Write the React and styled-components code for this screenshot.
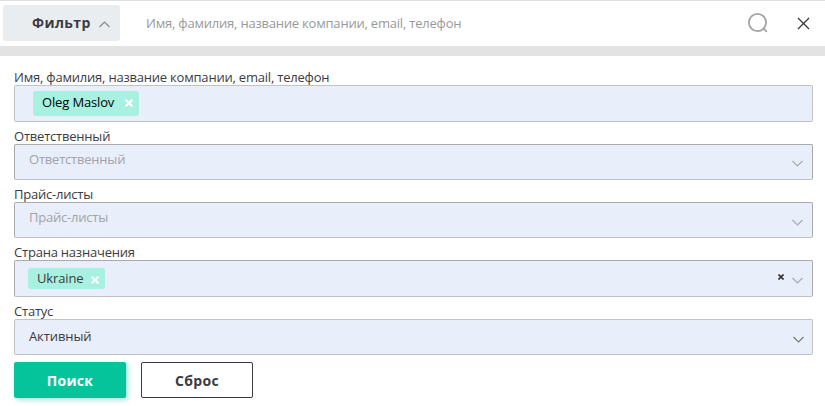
import { useState } from "react";
import styled, { createGlobalStyle } from "styled-components";

const GlobalStyle = createGlobalStyle`
  * {
    box-sizing: border-box;
  }

  body {
    margin: 0;
    background-color: #fff;
    color: #3b3b3f;
    font-family: "Open Sans", "Noto Sans", sans-serif;
    font-size: 13px;
    letter-spacing: -0.21px;
  }

  button,
  input {
    font-family: inherit;
  }
`;

const Container = styled.div`
  width: 100%;
  height: 406px;
  overflow: hidden;
`;

const Header = styled.div`
  display: flex;
  align-items: center;
  height: 56px;
  padding: 0 15px 0 3px;
  border-top: 1px solid #dcdfe3;
  border-bottom: 10px solid #e3e3e3;
`;

const FilterButton = styled.button`
  display: flex;
  align-items: center;
  width: 117px;
  height: 36px;
  margin-top: -1px;
  padding: 0 10px 1px 29px;
  border: none;
  border-radius: 3px;
  background-color: #e9edf0;
  color: #3b3b3f;
  font-size: 14px;
  font-weight: 700;
  letter-spacing: 0.4px;
  cursor: pointer;

  svg {
    margin: 4px 0 0 8px;
  }
`;

const SearchInput = styled.input`
  flex: 1;
  height: 36px;
  margin-left: 26px;
  padding: 0 0 2px;
  border: none;
  outline: none;
  background: transparent;
  font-size: 13px;
  letter-spacing: -0.21px;

  &::placeholder {
    color: #999;
    opacity: 1;
  }
`;

const IconButton = styled.button`
  display: flex;
  padding: 0;
  margin: -1px 0 0 ${(props) => props.$gap || 0}px;
  border: none;
  background: none;
  cursor: pointer;
`;

const Form = styled.form`
  padding: 7px 12px 0 14px;
`;

const Label = styled.label`
  display: block;
  height: 22px;
  padding-top: 5px;
  line-height: 18px;
`;

const Field = styled.div`
  display: flex;
  align-items: center;
  height: ${(props) => props.$height || 36}px;
  padding: 0 8px 0 ${(props) => props.$indent || 14}px;
  border: 1px solid ${(props) => (props.$soft ? "#c3c3c5" : "#aaa")};
  border-bottom-color: #c0c0c2;
  border-radius: 2px;
  background-color: #e8eefa;
`;

const Placeholder = styled.span`
  flex: 1;
  margin-top: -7px;
  color: #a3a3a5;
`;

const Value = styled.span`
  flex: 1;
  margin-top: -2px;
  letter-spacing: -0.1px;
`;

const Tag = styled.span`
  display: flex;
  align-items: center;
  height: ${(props) => props.$height}px;
  padding: 0 6px ${(props) => props.$lift}px 9px;
  border-radius: 3px;
  background-color: #a8f0df;
  color: ${(props) => props.$color || "inherit"};
  letter-spacing: -0.15px;

  svg {
    margin: 3px 0 0 ${(props) => props.$gap}px;
  }
`;

const Clear = styled.span`
  display: flex;
  margin: -4px 8px 0 auto;
`;

const Arrow = styled.span`
  display: flex;
  margin: ${(props) => props.$top || 0}px ${(props) => props.$right || 0}px 0 0;
`;

const Buttons = styled.div`
  display: flex;
  gap: 15px;
  margin-top: 7px;
`;

const Button = styled.button`
  width: 112px;
  height: 36px;
  padding: 1px 0 0;
  border: ${(props) => (props.$primary ? "none" : "1px solid #3b3b3f")};
  border-radius: 2px;
  background-color: ${(props) => (props.$primary ? "#05c49b" : "#fff")};
  box-shadow: ${(props) =>
    props.$primary ? "2px 2px 5px rgba(5, 196, 155, 0.4)" : "none"};
  color: ${(props) => (props.$primary ? "#fff" : "#3b3b3f")};
  font-size: 14px;
  font-weight: 700;
  letter-spacing: 0.3px;
  cursor: pointer;
`;

const Chevron = ({ color = "#aaa", up }) => (
  <svg width="11" height="7" viewBox="0 0 11 7" fill="none">
    <path
      d={up ? "M.5 6 5.5 1l5 5" : "M.5 1l5 5 5-5"}
      stroke={color}
      strokeWidth="1.1"
    />
  </svg>
);

const Cross = ({ size = 8, color = "#fff", width = 2 }) => (
  <svg width={size} height={size} viewBox="0 0 8 8" fill="none">
    <path d="M.6.6l6.8 6.8M7.4.6.6 7.4" stroke={color} strokeWidth={width} />
  </svg>
);

const App = () => {
  const [query, setQuery] = useState("");

  return (
    <Container>
      <GlobalStyle />
      <Header>
        <FilterButton type="button">
          Фильтр
          <Chevron up color="#888" />
        </FilterButton>
        <SearchInput
          value={query}
          placeholder="Имя, фамилия, название компании, email, телефон"
          onChange={(e) => setQuery(e.target.value)}
        />
        <IconButton type="button">
          <svg width="20" height="20" viewBox="0 0 20 20" fill="none">
            <circle cx="9.5" cy="9.5" r="8.6" stroke="#a3a3a3" strokeWidth="1.8" />
            <path d="M15.5 15.5l3.4 3.4" stroke="#a3a3a3" strokeWidth="1.8" />
          </svg>
        </IconButton>
        <IconButton type="button" $gap={29}>
          <Cross size={13} color="#3b3b3f" width={0.8} />
        </IconButton>
      </Header>
      <Form onSubmit={(e) => e.preventDefault()}>
        <Label>Имя, фамилия, название компании, email, телефон</Label>
        <Field $height={37} $indent={18} $soft>
          <Tag $height={25} $lift={4} $gap={11} $color="#000">
            Oleg Maslov
            <Cross />
          </Tag>
        </Field>

        <Label>Ответственный</Label>
        <Field>
          <Placeholder>Ответственный</Placeholder>
          <Arrow $top={2} $right={1}>
            <Chevron />
          </Arrow>
        </Field>

        <Label>Прайс-листы</Label>
        <Field>
          <Placeholder>Прайс-листы</Placeholder>
          <Arrow $top={4} $right={1}>
            <Chevron />
          </Arrow>
        </Field>

        <Label>Страна назначения</Label>
        <Field $height={37} $indent={13}>
          <Tag $height={21} $lift={1} $gap={8}>
            Ukraine
            <Cross />
          </Tag>
          <Clear>
            <Cross size={6} color="#333" width={2.2} />
          </Clear>
          <Arrow $top={4} $right={1}>
            <Chevron />
          </Arrow>
        </Field>

        <Label>Статус</Label>
        <Field $soft>
          <Value>Активный</Value>
          <Arrow $top={4}>
            <Chevron color="#777" />
          </Arrow>
        </Field>

        <Buttons>
          <Button $primary type="submit">
            Поиск
          </Button>
          <Button type="reset">Сброс</Button>
        </Buttons>
      </Form>
    </Container>
  );
};

export default App;
